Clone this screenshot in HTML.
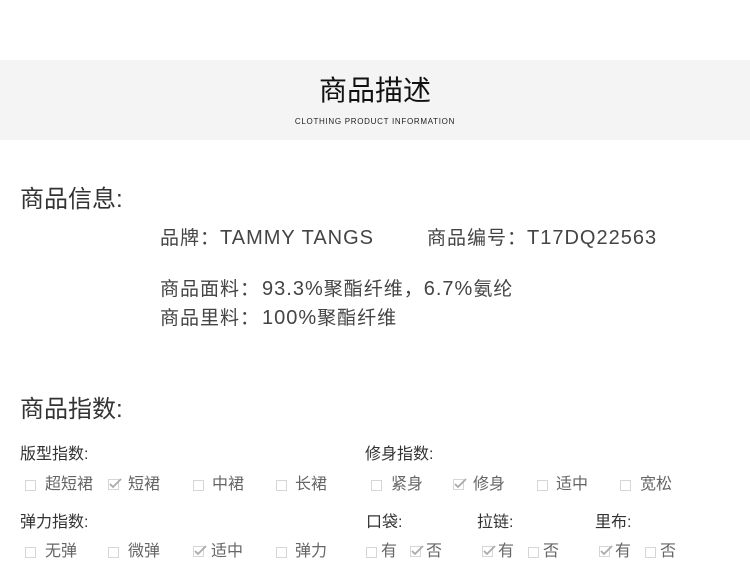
<!DOCTYPE html>
<html><head><meta charset="utf-8"><style>
body{margin:0;width:750px;height:565px;background:#fff;position:relative;overflow:hidden;font-family:"Liberation Sans","Noto Sans CJK SC",sans-serif;}
.a{position:absolute;white-space:nowrap;line-height:1;}
.band{position:absolute;left:0;top:60px;width:750px;height:80px;background:#f4f4f4;}
.h{font-size:24px;color:#333;}
.i{font-size:19px;color:#444;letter-spacing:1px;}
.i span{font-size:20px;letter-spacing:1px;}
.i span.f{margin-left:2px;}
.l{font-size:16px;color:#333;}
.o{font-size:16px;color:#666;}
.b{position:absolute;width:9px;height:9px;border:1px solid #d6d6d6;background:#fff;}
.c{position:absolute;width:14px;height:12px;}
</style></head><body>
<div class="band"></div>
<div class="a" style="left:0;width:750px;text-align:center;top:77px;font-size:28px;color:#111;">商品描述</div>
<div class="a" style="left:0;width:750px;text-align:center;top:118px;font-size:8px;color:#222;letter-spacing:0.7px;">CLOTHING PRODUCT INFORMATION</div>

<div class="a h" style="left:20px;top:188px;">商品信息:</div>
<div class="a i" style="left:160px;top:228px;">品牌：<span>TAMMY TANGS</span></div>
<div class="a i" style="left:427px;top:228px;">商品编号：<span>T17DQ22563</span></div>
<div class="a i" style="left:160px;top:279px;">商品面料：<span class="f">93.3%</span>聚酯纤维，<span>6.7%</span>氨纶</div>
<div class="a i" style="left:160px;top:308px;">商品里料：<span class="f">100%</span>聚酯纤维</div>

<div class="a h" style="left:20px;top:398px;">商品指数:</div>

<div class="a l" style="left:20px;top:447px;">版型指数:</div>
<div class="a l" style="left:365px;top:447px;">修身指数:</div>
<div class="a l" style="left:20px;top:515px;">弹力指数:</div>
<div class="a l" style="left:366px;top:515px;">口袋:</div>
<div class="a l" style="left:477px;top:515px;">拉链:</div>
<div class="a l" style="left:595px;top:515px;">里布:</div>

<div class="b" style="left:25px;top:480px"></div><div class="a o" style="left:45px;top:477px;">超短裙</div>
<svg class="c" style="left:108px;top:478px" viewBox="0 0 14 12"><rect x="0.5" y="1.5" width="10" height="10" fill="none" stroke="#d6d6d6"/><path d="M2 6l3 3 8-8" fill="none" stroke="#aaa" stroke-width="1.8"/></svg><div class="a o" style="left:128px;top:477px;">短裙</div>
<div class="b" style="left:193px;top:480px"></div><div class="a o" style="left:212px;top:477px;">中裙</div>
<div class="b" style="left:276px;top:480px"></div><div class="a o" style="left:295px;top:477px;">长裙</div>

<div class="b" style="left:371px;top:480px"></div><div class="a o" style="left:391px;top:477px;">紧身</div>
<svg class="c" style="left:453px;top:478px" viewBox="0 0 14 12"><rect x="0.5" y="1.5" width="10" height="10" fill="none" stroke="#d6d6d6"/><path d="M2 6l3 3 8-8" fill="none" stroke="#aaa" stroke-width="1.8"/></svg><div class="a o" style="left:473px;top:477px;">修身</div>
<div class="b" style="left:537px;top:480px"></div><div class="a o" style="left:556px;top:477px;">适中</div>
<div class="b" style="left:620px;top:480px"></div><div class="a o" style="left:640px;top:477px;">宽松</div>

<div class="b" style="left:25px;top:547px"></div><div class="a o" style="left:45px;top:544px;">无弹</div>
<div class="b" style="left:108px;top:547px"></div><div class="a o" style="left:128px;top:544px;">微弹</div>
<svg class="c" style="left:193px;top:545px" viewBox="0 0 14 12"><rect x="0.5" y="1.5" width="10" height="10" fill="none" stroke="#d6d6d6"/><path d="M2 6l3 3 8-8" fill="none" stroke="#aaa" stroke-width="1.8"/></svg><div class="a o" style="left:211px;top:544px;">适中</div>
<div class="b" style="left:276px;top:547px"></div><div class="a o" style="left:295px;top:544px;">弹力</div>

<div class="b" style="left:366px;top:547px"></div><div class="a o" style="left:381px;top:544px;">有</div>
<svg class="c" style="left:410px;top:545px" viewBox="0 0 14 12"><rect x="0.5" y="1.5" width="10" height="10" fill="none" stroke="#d6d6d6"/><path d="M2 6l3 3 8-8" fill="none" stroke="#aaa" stroke-width="1.8"/></svg><div class="a o" style="left:426px;top:544px;">否</div>
<svg class="c" style="left:482px;top:545px" viewBox="0 0 14 12"><rect x="0.5" y="1.5" width="10" height="10" fill="none" stroke="#d6d6d6"/><path d="M2 6l3 3 8-8" fill="none" stroke="#aaa" stroke-width="1.8"/></svg><div class="a o" style="left:498px;top:544px;">有</div>
<div class="b" style="left:528px;top:547px"></div><div class="a o" style="left:543px;top:544px;">否</div>
<svg class="c" style="left:599px;top:545px" viewBox="0 0 14 12"><rect x="0.5" y="1.5" width="10" height="10" fill="none" stroke="#d6d6d6"/><path d="M2 6l3 3 8-8" fill="none" stroke="#aaa" stroke-width="1.8"/></svg><div class="a o" style="left:615px;top:544px;">有</div>
<div class="b" style="left:645px;top:547px"></div><div class="a o" style="left:660px;top:544px;">否</div>
</body></html>
